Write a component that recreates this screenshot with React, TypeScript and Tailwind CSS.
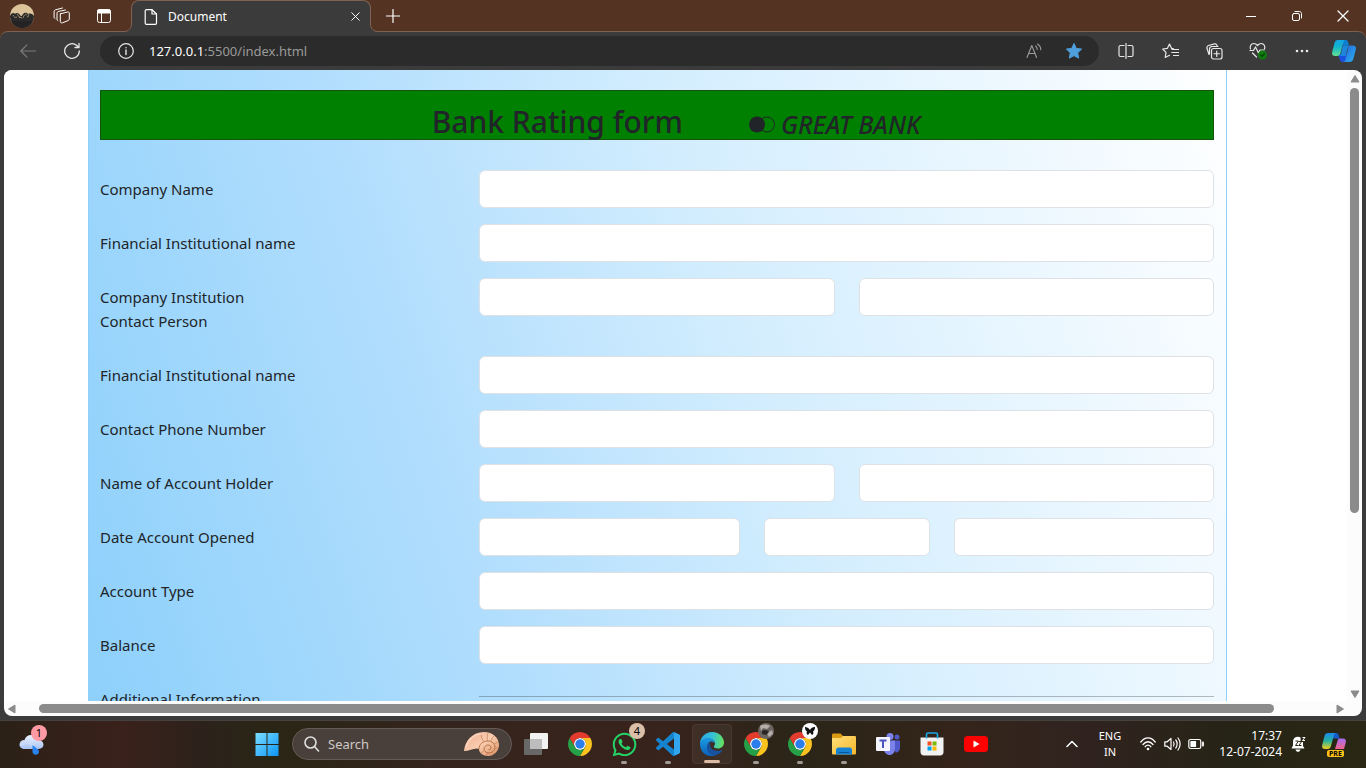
import React from "react";
import { FaWhatsapp } from "react-icons/fa";

type IconProps = { className?: string };

const stroke = {
  fill: "none",
  stroke: "currentColor",
  strokeLinecap: "round" as const,
  strokeLinejoin: "round" as const,
};

function Avatar() {
  return (
    <svg viewBox="0 0 24 24" className="size-6" aria-hidden="true">
      <defs>
        <clipPath id="avatar-clip">
          <circle cx="12" cy="12" r="12" />
        </clipPath>
      </defs>
      <g clipPath="url(#avatar-clip)">
        <rect width="24" height="24" fill="#dcc39a" />
        <path d="M0 12c1-3 4-4 5-2 1-2 4-1 5 1 1 2 2 1 3-1 2-2 4-1 5 0 2-1 5 0 6 2v12H0z" fill="#2b2a2a" />
        <path d="M3 11c1 2 2 3 4 2M7 10l3 4M13 14c1-3 2-4 4-3M18 10c1 1 1 3-1 3M9 13l3 1" stroke="#b99f78" strokeWidth=".8" fill="none" />
        <path d="M2 17h20v7H2z" fill="#232323" />
      </g>
    </svg>
  );
}

function Workspaces() {
  return (
    <svg viewBox="0 0 18 18" className="size-[18px]" {...stroke} aria-hidden="true">
      <path d="M7.500 6.800 14.500 5c1-.2 1.800.2 1.800 1v6c0 .7-.3 1.200-1 1.500l-5.800 2.300c-1 .4-2.200-.1-2.200-1.100V7z" />
      <path d="M4.800 13.600c-.5-.2-.8-.5-.8-1.100V6.200c0-.8.400-1.400 1.200-1.700L12.500 3M2 11.500c-.6-.2-.9-.6-.9-1.200V4.600c0-.8.400-1.400 1.200-1.700L9.500 1" />
    </svg>
  );
}

function TabActions() {
  return (
    <svg viewBox="0 0 16 16" className="size-4" {...stroke} aria-hidden="true">
      <rect x="1.500" y="1.500" width="13" height="13" rx="2" />
      <path d="M2 2h12v3H2z" fill="currentColor" />
      <path d="M5.500 5v9" />
    </svg>
  );
}

function PageIcon() {
  return (
    <svg viewBox="0 0 14 16" className="h-4 w-[14px]" {...stroke} strokeWidth="1.200" aria-hidden="true">
      <path d="M2.500.700H8L12.500 5v9c0 .800-.400 1.300-1.200 1.300H2.500c-.800 0-1.300-.500-1.300-1.300V2C1.200 1.200 1.700.700 2.500.700z" />
      <path d="M8 .700V5h4.500" />
    </svg>
  );
}

function Cross({ className }: IconProps) {
  return (
    <svg viewBox="0 0 12 12" className={className} {...stroke} strokeWidth="1.300" aria-hidden="true">
      <path d="m1 1 10 10M11 1 1 11" />
    </svg>
  );
}

function Copilot() {
  return (
    <svg viewBox="0 0 24 24" className="size-6" aria-hidden="true">
      <defs>
        <linearGradient id="cp-a" x1="0" y1="0" x2="0" y2="1">
          <stop offset="0" stopColor="#12a5e6" />
          <stop offset=".45" stopColor="#15b5c9" />
          <stop offset="1" stopColor="#63e08f" />
        </linearGradient>
        <linearGradient id="cp-b" x1="0" y1="0" x2="1" y2="1">
          <stop offset="0" stopColor="#2463d8" />
          <stop offset="1" stopColor="#2bb4f2" />
        </linearGradient>
      </defs>
      <path d="M6 15h10l-1.500 6c-.4 1.300-1.200 2-2.500 2h-1.500c-1.500 0-2.300-1-2.700-2.500z" fill="#1b50df" />
      <path d="M10 1h3.500c1.500 0 2.300.8 2.700 2.200L17 6.500h-6z" fill="#0c7fd2" />
      <path d="M6 1h7.500c-1.300.2-1.800 1.200-2.200 2.600l-2.800 10.400C8 16 7 17 5 17H3C.6 17-.400 15.300.2 13L2.500 4C3 2 4 1 6 1z" fill="url(#cp-a)" />
      <path d="M16.500 6.500H21c2.400 0 3.300 1.700 2.800 4l-2.300 8.700c-.6 2.500-1.700 3.800-4 3.800H11c1.300 0 2-1 2.400-2.400L16 10z" fill="url(#cp-b)" />
      <path d="M10.800 6.500h5.700L15 11.500 13.500 17H8c.4-.6.700-1.500 1-2.500z" fill="#1c86dc" />
    </svg>
  );
}

function CopilotPre() {
  return (
    <svg viewBox="0 0 24 24" className="size-6" aria-hidden="true">
      <defs>
        <linearGradient id="pre-a" x1="0" y1="0" x2="0" y2="1">
          <stop offset="0" stopColor="#1b8af0" />
          <stop offset=".5" stopColor="#26b29d" />
          <stop offset="1" stopColor="#f2cf1e" />
        </linearGradient>
        <linearGradient id="pre-b" x1="0" y1="0" x2="0" y2="1">
          <stop offset="0" stopColor="#a76cf0" />
          <stop offset="1" stopColor="#f1658a" />
        </linearGradient>
      </defs>
      <path d="M10 1h4c1.500 0 2.300.8 2.700 2.200l.8 3.300H11z" fill="#1559c9" />
      <path d="M6 1h8c-1.300.2-1.800 1.200-2.200 2.600L9 14c-.5 2-1.500 3-3.500 3H3C.6 17-.4 15.300.2 13L2.500 4C3 2 4 1 6 1z" fill="url(#pre-a)" />
      <path d="M16.500 6.500H21c2.400 0 3.300 1.700 2.800 4L22 17h-9l2.500-8z" fill="url(#pre-b)" />
    </svg>
  );
}

function Chrome() {
  return (
    <svg viewBox="0 0 48 48" className="size-6" aria-hidden="true">
      <circle cx="24" cy="24" r="12" fill="#fff" />
      <path d="M24 12h20.780A24 24 0 0 0 3.220 12L13.610 30A11.990 11.990 0 0 1 24 12z" fill="#e33b2e" />
      <path d="M34.390 30 24 48a24 24 0 0 0 20.780-36H24a11.990 11.990 0 0 1 10.390 18z" fill="#fcc31f" />
      <path d="M13.610 30 3.220 12A24 24 0 0 0 24 48l10.390-18a11.990 11.990 0 0 1-20.780 0z" fill="#25a046" />
      <circle cx="24" cy="24" r="9.500" fill="#2b7de9" />
    </svg>
  );
}

function VsCode() {
  return (
    <svg viewBox="0 0 24 24" className="size-6" aria-hidden="true">
      <path
        fill="#1484cf"
        d="M23.150 2.587L18.210.210a1.494 1.494 0 0 0-1.705.290l-9.460 8.630-4.120-3.128a.999.999 0 0 0-1.276.057L.327 7.261A1 1 0 0 0 .326 8.740L3.899 12 .326 15.260a1 1 0 0 0 .001 1.479L1.650 17.940a.999.999 0 0 0 1.276.057l4.120-3.128 9.460 8.630a1.492 1.492 0 0 0 1.704.290l4.942-2.377A1.500 1.500 0 0 0 24 20.060V3.939a1.500 1.500 0 0 0-.850-1.352zm-5.146 14.861L10.826 12l7.178-5.448v10.896z"
      />
      <path d="M18 .150 23.150 2.587A1.500 1.500 0 0 1 24 3.939v16.120c0 .600-.300 1.100-.850 1.352L18 23.850z" fill="#32a5ef" />
    </svg>
  );
}

function Edge() {
  return (
    <svg viewBox="0 0 24 24" className="size-6" aria-hidden="true">
      <defs>
        <linearGradient id="edge-a" x1="0" y1=".4" x2="1" y2=".5">
          <stop offset="0" stopColor="#2ba8e6" />
          <stop offset=".5" stopColor="#35c1d8" />
          <stop offset="1" stopColor="#64e25c" />
        </linearGradient>
        <linearGradient id="edge-b" x1="0" y1="0" x2="0" y2="1">
          <stop offset="0" stopColor="#1a9be2" />
          <stop offset="1" stopColor="#0c5fb8" />
        </linearGradient>
      </defs>
      <path d="M0 12C0 5 5.500 0 12 0s12 4.800 12 10.500c0 3.800-2.800 6-6 6-2.600 0-4.200-1-4.200-2 0-.7 1.200-1.200 1.200-3C15 8.700 12 6.500 8.500 6.500 4 6.500 1 9 0 12z" fill="url(#edge-a)" />
      <path d="M0 12c.3-3.500 4-6 8-6 4.200 0 7 2.800 7 5.600-1-1.300-2.200-2-4-2-2.500 0-3.500 2.400-3.500 5 0 4.500 3 8.300 7.500 9C6.500 26 0 20 0 12z" fill="url(#edge-b)" />
      <path d="M11 9.600C8 11 7 13 7 15.500c0 4.500 3.500 8.200 8 8 3-.5 5.700-2.500 7.300-5 .3-.5 0-.9-.6-.6-1.200.6-2.400.9-3.700.9-4.500 0-8-2.300-8-5.800 0-1.500.5-2.700 1-3.400z" fill="#17529f" />
    </svg>
  );
}

function Folder() {
  return (
    <svg viewBox="0 0 24 24" className="size-6" aria-hidden="true">
      <defs>
        <linearGradient id="folder-a" x1="0" y1="0" x2="1" y2="1">
          <stop offset="0" stopColor="#ffe07a" />
          <stop offset="1" stopColor="#f4b62c" />
        </linearGradient>
      </defs>
      <path d="M0 3c0-.8.500-1.500 1.500-1.500h7L11 4h11c1.200 0 2 .7 2 1.700V12H0z" fill="#dc9b14" />
      <path d="M0 6h9l2-2h11.500c1 0 1.500.7 1.500 1.500V21c0 1-.5 1.500-1.500 1.500h-21C.5 22.500 0 22 0 21z" fill="url(#folder-a)" />
      <path d="M4 22.500V18c0-1.500 1-2.500 2.500-2.500h11c1.500 0 2.500 1 2.500 2.500v4.500z" fill="#1682d4" />
      <path d="M7 20h10v1H7z" fill="#0b579d" />
    </svg>
  );
}

function Teams() {
  return (
    <svg viewBox="0 0 24 24" className="size-6" aria-hidden="true">
      <circle cx="14" cy="4.500" r="3.500" fill="#7b83eb" />
      <circle cx="21" cy="5" r="2.500" fill="#5059c9" />
      <path d="M17 8.500h7v7c0 3-2 5-4.500 5z" fill="#5059c9" />
      <path d="M8 8.500h11v8c0 4-2.500 6.500-5.500 6.500S8 20.500 8 17z" fill="#7b83eb" />
      <rect y="5" width="14" height="14" rx="1" fill="#f5f5ff" />
      <path d="M3.500 8.500h7M7 8.500V16" stroke="#4b53bc" strokeWidth="2" />
    </svg>
  );
}

function Store() {
  return (
    <svg viewBox="0 0 24 24" className="size-6" aria-hidden="true">
      <path d="M.5 5.500h23V20c0 2-1.200 3.500-3.500 3.500H4C1.800 23.500.5 22 .5 20z" fill="#f2f2f2" />
      <path d="M6.500 6.500V2.500C6.500 1.500 7 1 8 1h8c1 0 1.500.5 1.500 1.500v4" fill="none" stroke="#1ca7e8" strokeWidth="1.600" />
      <path d="M7.500 9.500h4v4h-4z" fill="#f25022" />
      <path d="M12.500 9.500h4v4h-4z" fill="#7fba00" />
      <path d="M7.500 14.500h4v4h-4z" fill="#00a4ef" />
      <path d="M12.500 14.500h4v4h-4z" fill="#ffb900" />
    </svg>
  );
}

function YouTube() {
  return (
    <svg viewBox="0 0 24 24" className="size-6" aria-hidden="true">
      <rect y="4" width="24" height="16" rx="3.500" fill="#f00" />
      <path d="m9.500 8.500 6 3.500-6 3.500z" fill="#fff" />
    </svg>
  );
}

function TaskView() {
  return (
    <svg viewBox="0 0 24 24" className="size-6" aria-hidden="true">
      <rect x="0" y="7" width="18" height="16" rx="1" fill="#686868" />
      <rect x="6" y="1" width="18" height="16" rx="1" fill="#f2f2f2" />
      <path d="M6 7h12v10H6z" fill="#bdbdbd" />
    </svg>
  );
}

function WindowsLogo() {
  return (
    <svg viewBox="0 0 24 24" className="size-6" aria-hidden="true">
      <defs>
        <linearGradient id="win" x1="0" y1="0" x2="24" y2="24" gradientUnits="userSpaceOnUse">
          <stop offset="0" stopColor="#7fe0ff" />
          <stop offset="1" stopColor="#0a94f8" />
        </linearGradient>
      </defs>
      <path d="M.5 1h11v11H.5zM12.500 1h11v11h-11zM.5 13h11v11H.5zM12.500 13h11v11h-11z" fill="url(#win)" />
    </svg>
  );
}

function Weather() {
  return (
    <svg viewBox="0 0 26 22" className="h-[22px] w-[26px]" aria-hidden="true">
      <defs>
        <linearGradient id="cloud" x1="0" y1="0" x2="0" y2="1">
          <stop offset="0" stopColor="#eef3ff" />
          <stop offset="1" stopColor="#a9c3f2" />
        </linearGradient>
      </defs>
      <path d="M6 16c-3.500 0-5.500-2-5.500-4.500S2.500 7 5.500 7C6.500 3.500 9 2 12 2c3.500 0 6 2.500 6.500 5 3.500 0 6 2 6 4.600S22.500 16 19.500 16z" fill="url(#cloud)" />
      <path d="M2 12c4-3 9-3 12 0" stroke="#cbdaf8" fill="none" strokeWidth="2" />
      <path d="M13.500 12c3 2.500 6.500 4.500 6.500 7a3.300 3.300 0 0 1-6.500 0z" fill="#2a82ee" />
    </svg>
  );
}

function Shell() {
  return (
    <svg viewBox="0 0 36 26" className="h-[26px] w-9" aria-hidden="true">
      <defs>
        <linearGradient id="shell" x1="0" y1="0" x2="1" y2="1">
          <stop offset="0" stopColor="#f0a98e" />
          <stop offset=".5" stopColor="#f9cdb0" />
          <stop offset="1" stopColor="#d98f62" />
        </linearGradient>
      </defs>
      <path d="M1 20C2 10 9 1 21 1c9 0 15 6 15 13 0 6-5 11-11 11-5 0-9-3-9-7-4-2-9 2-15 2z" fill="url(#shell)" />
      <g fill="none" stroke="#c98660" strokeWidth=".8">
        <path d="M16 18c0-5 4-8 9-8 4 0 7 3 7 6s-3 6-6 6-5-2-5-4 2-4 4-4 3 1.500 3 3-1.500 2-2.500 1.500" stroke="#a8602f" />
        <path d="M18 1.500c0 4 1 7 3 9.500M25 2c-1 3-1 5-.5 8M31 5c-2 2-3 4-3.500 6M35 11l-4 2M35 17l-3 0M31 23l-2-2M24 25l0-3M18 22l3-2" />
      </g>
      <path d="M3 16C6 8 12 3 20 2.500" stroke="#ffe6d6" strokeWidth="1.500" fill="none" opacity=".6" />
    </svg>
  );
}

function ToolButton({ label, children, className = "w-11" }: { label: string; children: React.ReactNode; className?: string }) {
  return (
    <button type="button" aria-label={label} className={`flex h-full shrink-0 items-center justify-center ${className}`}>
      {children}
    </button>
  );
}

function TitleBar() {
  return (
    <header className="relative flex h-[31px] shrink-0 items-start text-white">
      <div className="flex h-8 items-center">
        <ToolButton label="Profile">
          <Avatar />
        </ToolButton>
        <ToolButton label="Workspaces" className="w-9">
          <Workspaces />
        </ToolButton>
        <ToolButton label="Tab actions" className="w-12">
          <TabActions />
        </ToolButton>
      </div>
      <div className="relative ml-[3px] flex h-8 w-60 items-center rounded-t-lg border border-b-0 border-[#7d6152] bg-[#3b3b3b] pl-3 pr-[7px]">
        <svg viewBox="0 0 8 8" className="absolute -left-2 bottom-0 size-2" aria-hidden="true">
          <path d="M8 0v8H0c4.400 0 7.500-3.600 7.500-8z" fill="#3b3b3b" />
          <path d="M0 7.500c4.400 0 7.500-3.100 7.500-7.500" fill="none" stroke="#7d6152" />
        </svg>
        <svg viewBox="0 0 8 8" className="absolute -right-2 bottom-0 size-2" aria-hidden="true">
          <path d="M0 0v8h8C3.600 8 .5 4.400.5 0z" fill="#3b3b3b" />
          <path d="M8 7.500C3.600 7.500.5 4.400.5 0" fill="none" stroke="#7d6152" />
        </svg>
        <PageIcon />
        <span className="ml-[10px] flex-1 text-xs leading-4">Document</span>
        <button type="button" aria-label="Close tab" className="flex size-4 items-center justify-center">
          <Cross className="size-[9px]" />
        </button>
      </div>
      <div className="flex h-8">
        <ToolButton label="New tab">
          <svg viewBox="0 0 14 14" className="size-[14px]" {...stroke} strokeWidth="1.200" aria-hidden="true">
            <path d="M7 .5v13M.5 7h13" />
          </svg>
        </ToolButton>
      </div>
      <div className="ml-auto flex h-8">
        <ToolButton label="Minimize" className="w-[46px]">
          <svg viewBox="0 0 10 10" className="size-[10px]" {...stroke} aria-hidden="true">
            <path d="M0 5.500h10" />
          </svg>
        </ToolButton>
        <ToolButton label="Restore" className="w-[46px]">
          <svg viewBox="0 0 10 10" className="size-[10px]" {...stroke} aria-hidden="true">
            <rect x=".5" y="2.500" width="7" height="7" rx="1.500" />
            <path d="M3 .5h4.500c1 0 2 1 2 2V7" />
          </svg>
        </ToolButton>
        <ToolButton label="Close" className="w-[46px]">
          <Cross className="size-3" />
        </ToolButton>
      </div>
    </header>
  );
}

function Toolbar() {
  return (
    <nav className="flex h-[39px] shrink-0 items-center rounded-t-lg border-t border-[#7d6152] bg-[#3b3b3b] pl-[6px] pr-[2px] text-[#e8e8e8]">
      <ToolButton label="Back">
        <svg viewBox="0 0 16 14" className="h-[14px] w-4 text-[#7b7b7b]" {...stroke} strokeWidth="1.200" aria-hidden="true">
          <path d="M15.500 7H.8M7 .8.800 7 7 13.200" />
        </svg>
      </ToolButton>
      <ToolButton label="Refresh">
        <svg viewBox="0 0 16 16" className="size-4" {...stroke} strokeWidth="1.300" aria-hidden="true">
          <path d="M15.300 8A7.300 7.300 0 1 1 12.800 2.500L15 4.500M15 .5v4h-4" />
        </svg>
      </ToolButton>
      <div className="ml-[6px] flex h-[30px] min-w-0 flex-1 items-center rounded-full bg-[#2b2b2b] pl-[18px]">
        <button type="button" aria-label="Site information">
          <svg viewBox="0 0 16 16" className="size-4" {...stroke} strokeWidth="1.200" aria-hidden="true">
            <circle cx="8" cy="8" r="7.300" />
            <path d="M8 7v4.500M8 4.600v.1" strokeWidth="1.400" />
          </svg>
        </button>
        <p className="ml-[15px] flex-1 text-[13px] leading-5 text-[#9a9a9a]">
          <span className="text-white">127.0.0.1</span>:5500/index.html
        </p>
        <ToolButton label="Read aloud" className="w-10">
          <svg viewBox="0 0 16 16" className="size-4 text-[#9a9a9a]" {...stroke} strokeWidth="1.100" aria-hidden="true">
            <path d="m1 14.500 4.800-12 4.800 12M2.600 10.500H9M9.500 3c1.200.800 1.700 2 1.700 3.500M11.500 1c2 1.200 3.200 3.200 3.300 5.800" />
          </svg>
        </ToolButton>
        <ToolButton label="Bookmark" className="mr-[5px] w-10">
          <svg viewBox="0 0 18 18" className="size-[18px]" aria-hidden="true">
            <path d="m9 1.500 2.300 4.900 5.300.700-3.900 3.700 1 5.400L9 13.600l-4.700 2.600 1-5.400L1.400 7.100l5.300-.700z" fill="#4e9fdc" stroke="#4e9fdc" strokeLinejoin="round" />
          </svg>
        </ToolButton>
      </div>
      <div className="ml-[5px] flex h-full">
        <ToolButton label="Split screen">
          <svg viewBox="0 0 16 16" className="size-4" {...stroke} strokeWidth="1.200" aria-hidden="true">
            <path d="M6 2.500H2.500C1.500 2.500 1 3 1 4v8c0 1 .5 1.500 1.500 1.500H6M10 2.500h3.500c1 0 1.500.5 1.500 1.500v8c0 1-.5 1.500-1.500 1.500H10M8 .5v15" />
          </svg>
        </ToolButton>
        <ToolButton label="Favorites">
          <svg viewBox="0 0 17 16" className="h-4 w-[17px]" {...stroke} strokeWidth="1.200" aria-hidden="true">
            <path d="M11.500 5.800 9.600 5.400 7.500 1 5.300 5.400.700 6l3.300 3.300L3.200 14.500 7.500 12.300M10 6.500h6.500M9.800 9.500h6.700M11.500 12.500h5" />
          </svg>
        </ToolButton>
        <ToolButton label="Collections">
          <svg viewBox="0 0 17 17" className="size-[17px]" {...stroke} strokeWidth="1.200" aria-hidden="true">
            <rect x="5.500" y="5.500" width="10.500" height="10.500" rx="2" />
            <path d="M10.750 8v5.500M8 10.750h5.500M3 11.500 1 5.500C.7 4 1 3 2.500 2.500L8.500.9c1.200-.3 2 .2 2.500 1.500l.5 1M3.500 11V6c0-1.500.8-2.500 2.500-2.500h6" />
          </svg>
        </ToolButton>
        <ToolButton label="Browser essentials">
          <svg viewBox="0 0 18 18" className="size-[18px]" {...stroke} strokeWidth="1.200" aria-hidden="true">
            <path d="M1.500 7C.5 4.500 2 1.500 4.800 1.500c1.700 0 2.700.8 3.700 2 1-1.200 2-2 3.700-2C15 1.500 16.500 4.500 15.500 7M1 8.500h3.500l2-3.500 3 6 1.500-3H15M3.500 11l4 4" />
            <circle cx="13.500" cy="13" r="4.500" fill="#107c10" stroke="none" />
            <path d="m11.500 13 1.500 1.500 2.500-3" stroke="#0a450a" />
          </svg>
        </ToolButton>
        <ToolButton label="Settings and more">
          <svg viewBox="0 0 14 4" className="h-1 w-[14px]" fill="currentColor" aria-hidden="true">
            <circle cx="2" cy="2" r="1.300" />
            <circle cx="7" cy="2" r="1.300" />
            <circle cx="12" cy="2" r="1.300" />
          </svg>
        </ToolButton>
        <ToolButton label="Copilot" className="w-10">
          <Copilot />
        </ToolButton>
      </div>
    </nav>
  );
}

type Row = { id: string; label: React.ReactNode; spans: string[] };

const rows: Row[] = [
  { id: "company", label: "Company Name", spans: ["col-span-8"] },
  { id: "institution", label: "Financial Institutional name", spans: ["col-span-8"] },
  {
    id: "contact",
    label: (
      <>
        Company Institution
        <br />
        Contact Person
      </>
    ),
    spans: ["col-span-4", "col-span-4"],
  },
  { id: "institution-2", label: "Financial Institutional name", spans: ["col-span-8"] },
  { id: "phone", label: "Contact Phone Number", spans: ["col-span-8"] },
  { id: "holder", label: "Name of Account Holder", spans: ["col-span-4", "col-span-4"] },
  { id: "opened", label: "Date Account Opened", spans: ["col-span-3", "col-span-2", "col-span-3"] },
  { id: "type", label: "Account Type", spans: ["col-span-8"] },
  { id: "balance", label: "Balance", spans: ["col-span-8"] },
];

function RatingForm() {
  return (
    <form className="ml-[84px] mr-[120px] min-h-full border-x border-[#8fd0fb] bg-[linear-gradient(72deg,#8dd0fb_0%,#b2defd_33%,#d2edfe_57%,#ffffff_100%)] pl-[11px] pr-3 pt-5 text-[15px] leading-6 text-[#212529]">
      <div className="mb-[30px] flex h-[50px] items-end justify-center gap-[65px] border border-[#14540f] bg-[#008000] pl-[38px]">
        <h1 className="text-[30px] font-medium leading-[34px]">Bank Rating form</h1>
        <p className="flex items-center gap-[5px] text-[25px] font-medium italic leading-[30px]">
          <svg viewBox="0 0 28 17" className="h-[17px] w-7" aria-hidden="true">
            <circle cx="9" cy="8.500" r="8" fill="#212529" />
            <circle cx="19" cy="8.500" r="7.500" fill="none" stroke="#212529" />
          </svg>
          GREAT BANK
        </p>
      </div>
      {rows.map((row) => (
        <div key={row.id} className="mb-4 grid grid-cols-12 items-start gap-x-6">
          <label htmlFor={`${row.id}-0`} className="col-span-4 py-[7px]">
            {row.label}
          </label>
          {row.spans.map((span, i) => (
            <input
              key={i}
              id={`${row.id}-${i}`}
              type="text"
              aria-label={i > 0 ? `${row.id} ${i + 1}` : undefined}
              className={`h-[38px] w-full min-w-0 rounded-md border border-[#dee2e6] bg-white px-3 ${span}`}
            />
          ))}
        </div>
      ))}
      <div className="grid grid-cols-12 items-start gap-x-6">
        <span className="col-span-4 py-[7px]">Additional Information</span>
        <hr className="col-span-8 mt-4 border-[#212529]/30" />
      </div>
    </form>
  );
}

function Arrow({ d, label }: { d: string; label: string }) {
  return (
    <button type="button" aria-label={label} className="flex size-[15px] shrink-0 items-center justify-center">
      <svg viewBox="0 0 10 10" className="size-[10px]" fill="#8b8b8b" stroke="#8b8b8b" strokeLinejoin="round" aria-hidden="true">
        <path d={d} />
      </svg>
    </button>
  );
}

function Viewport() {
  return (
    <div className="flex min-h-0 flex-1 flex-col bg-[#3b3b3b] px-1 pb-1">
      <div className="flex min-h-0 flex-1 flex-col overflow-hidden rounded-lg bg-[#fcfcfc]">
        <div className="flex min-h-0 flex-1">
          <main className="min-w-0 flex-1 overflow-hidden bg-white">
            <RatingForm />
          </main>
          <div className="flex w-[15px] flex-col items-center pt-px">
            <Arrow label="Scroll up" d="M5 1.500 9 8H1z" />
            <div className="flex w-[9px] flex-1 flex-col pt-[2px]">
              <div className="h-[71%] rounded-full bg-[#8b8b8b]" />
            </div>
            <Arrow label="Scroll down" d="M5 8.500 9 2H1z" />
          </div>
        </div>
        <div className="flex h-[15px] shrink-0 items-center pr-[15px]">
          <Arrow label="Scroll left" d="M1.500 5 8 1v8z" />
          <div className="flex flex-1 pl-5">
            <div className="h-[9px] w-[95.5%] rounded-full bg-[#8b8b8b]" />
          </div>
          <Arrow label="Scroll right" d="M8.500 5 2 1v8z" />
        </div>
      </div>
    </div>
  );
}

function TaskbarApp({ label, state, badge, children }: { label: string; state?: "open" | "active"; badge?: React.ReactNode; children: React.ReactNode }) {
  return (
    <button
      type="button"
      aria-label={label}
      className={
        state === "active"
          ? "relative mx-[2px] flex h-10 w-10 items-center justify-center rounded-[4px] border border-white/5 bg-white/5"
          : "relative mx-[2px] flex h-10 w-10 items-center justify-center"
      }
    >
      {children}
      {badge && <span className="absolute -top-px right-[-1px]">{badge}</span>}
      {state === "open" && <span className="absolute bottom-0 left-[17px] h-[3px] w-[6px] rounded-full bg-[#a09a96]" />}
      {state === "active" && <span className="absolute bottom-0 left-[11px] h-[3px] w-4 rounded-full bg-[#dcbba5]" />}
    </button>
  );
}

function Taskbar() {
  return (
    <footer className="flex h-12 shrink-0 items-center border-t border-[#47413d] bg-[linear-gradient(90deg,#2b2117_0%,#3a211b_9%,#2c221b_15%,#2a2615_20%,#34241d_32%,#38231c_48%,#2b2518_59%,#34241a_70%,#30231f_80%,#262416_90%,#2a2714_100%)] pb-px text-white">
      <div className="flex w-[245px] items-center pl-[19px]">
        <button type="button" aria-label="Weather" className="relative">
          <Weather />
          <span className="absolute right-[-2px] -top-2 flex size-4 items-center justify-center rounded-full bg-[#ff99a4] text-[11px] leading-4 text-black">1</span>
        </button>
      </div>
      <ToolButton label="Start">
        <WindowsLogo />
      </ToolButton>
      <label className="ml-[3px] mr-[2px] flex h-8 w-[220px] items-center rounded-full border border-[#665a55] bg-[#4a403b] pl-[11px] pr-3">
        <svg viewBox="0 0 16 16" className="size-4 shrink-0 text-[#dedede]" {...stroke} strokeWidth="1.600" aria-hidden="true">
          <circle cx="6.500" cy="6.500" r="5.500" />
          <path d="m10.500 10.500 4 4.500" />
        </svg>
        <input type="search" aria-label="Search" placeholder="Search" className="ml-2 min-w-0 flex-1 bg-transparent text-[13px] leading-5 outline-none placeholder:text-[#cfc9c6]" />
        <Shell />
      </label>
      <TaskbarApp label="Task view">
        <TaskView />
      </TaskbarApp>
      <TaskbarApp label="Chrome">
        <Chrome />
      </TaskbarApp>
      <TaskbarApp
        label="WhatsApp"
        state="open"
        badge={<span className="flex size-4 items-center justify-center rounded-full bg-[#dcbfa9] text-[11px] leading-4 text-black">4</span>}
      >
        <FaWhatsapp className="size-[27px] shrink-0 text-[#25d366]" />
      </TaskbarApp>
      <TaskbarApp label="Visual Studio Code" state="open">
        <VsCode />
      </TaskbarApp>
      <TaskbarApp label="Edge" state="active">
        <Edge />
      </TaskbarApp>
      <TaskbarApp
        label="Chrome profile 1"
        state="open"
        badge={
          <svg viewBox="0 0 16 16" className="mr-[3px] size-4" aria-hidden="true">
            <circle cx="8" cy="8" r="8" fill="#6b6561" />
            <path d="M2 3c3-2 7-2 10 0l-3 3-4-1-2 3zM9 10l5-3 1 4-4 3z" fill="#b5aea8" />
            <path d="M4 8c2-2 6-1 7 1l-3 3-4-1z" fill="#2a2625" />
          </svg>
        }
      >
        <Chrome />
      </TaskbarApp>
      <TaskbarApp
        label="Chrome profile 2"
        state="open"
        badge={
          <svg viewBox="0 0 16 16" className="mr-[3px] size-4" aria-hidden="true">
            <circle cx="8" cy="8" r="8" fill="#fff" />
            <path d="M8 7C6 4 3.500 4 3 4c0 2 .5 4 2 4.500-1 1.500 0 3 1 3.500L8 9.500l2 2.500c1-.5 2-2 1-3.500C12.500 8 13 6 13 4c-1 0-3.500 0-5 3z" fill="#111" />
          </svg>
        }
      >
        <Chrome />
      </TaskbarApp>
      <TaskbarApp label="File Explorer" state="open">
        <Folder />
      </TaskbarApp>
      <TaskbarApp label="Teams">
        <Teams />
      </TaskbarApp>
      <TaskbarApp label="Microsoft Store">
        <Store />
      </TaskbarApp>
      <TaskbarApp label="YouTube">
        <YouTube />
      </TaskbarApp>

      <div className="ml-auto flex h-full items-center pr-5 text-xs leading-4">
        <ToolButton label="Show hidden icons" className="w-8">
          <svg viewBox="0 0 12 8" className="h-2 w-3" {...stroke} strokeWidth="1.500" aria-hidden="true">
            <path d="m1 6.500 5-5 5 5" />
          </svg>
        </ToolButton>
        <button type="button" className="w-11 text-center text-[11px]">
          ENG
          <br />
          IN
        </button>
        <button type="button" aria-label="Network, sound and battery" className="ml-2 flex w-16 items-center justify-between">
          <svg viewBox="0 0 16 14" className="h-[14px] w-4" {...stroke} strokeWidth="1.300" aria-hidden="true">
            <path d="M.8 5C5-.5 11-.5 15.200 5M3 7.500c3-3.700 7-3.700 10 0M5.200 9.700c1.700-2 3.900-2 5.600 0" />
            <circle cx="8" cy="12" r="1.300" fill="currentColor" stroke="none" />
          </svg>
          <svg viewBox="0 0 17 14" className="h-[14px] w-[17px]" {...stroke} strokeWidth="1.200" aria-hidden="true">
            <path d="M.8 4.800h2.400L7 1.500v11L3.200 9.200H.8zM9.500 5c.8 1.200.8 2.800 0 4M11.800 3c1.800 2.200 1.800 5.800 0 8M14 1c2.800 3.500 2.800 8.500 0 12" />
          </svg>
          <svg viewBox="0 0 16 12" className="h-3 w-4" {...stroke} strokeWidth="1.200" aria-hidden="true">
            <rect x=".8" y="1.500" width="12" height="9" rx="1.800" />
            <path d="M3 3.500h4.500v5H3z" fill="currentColor" />
            <path d="M15 4.500v3" strokeWidth="1.800" />
          </svg>
        </button>
        <button type="button" className="ml-[10px] w-[68px] text-right text-xs">
          17:37
          <br />
          12-07-2024
        </button>
        <ToolButton label="Notifications" className="ml-1 w-6">
          <svg viewBox="0 0 16 16" className="size-4" aria-hidden="true">
            <path d="M3 5.500C3 2.500 5 .8 8 .8c1 0 2 .300 2.600.800V6H13v4l1.500 2.500H1.500L3 9.500zM5.500 13.500h5C10.200 15 9 15.800 8 15.800s-2.200-.8-2.500-2.300z" fill="#fff" />
            <path d="M5.500 5h3L5.500 9.500h3M9 5.500h2.500L9 9.500h2.500" stroke="#2a2615" fill="none" />
            <path d="M12.500 1.500h2.500l-2.500 3H15" stroke="#fff" fill="none" />
          </svg>
        </ToolButton>
        <button type="button" aria-label="Copilot preview" className="relative ml-3">
          <CopilotPre />
          <span className="absolute -bottom-px left-[5px] rounded-[2px] bg-[#fdc31b] px-[2px] text-[7px] font-bold leading-[7px] text-black">PRE</span>
        </button>
      </div>
    </footer>
  );
}

export default function App() {
  return (
    <div className="flex h-screen flex-col overflow-hidden bg-[#553322] font-['Noto_Sans','Open_Sans',sans-serif]">
      <TitleBar />
      <Toolbar />
      <Viewport />
      <Taskbar />
    </div>
  );
}
